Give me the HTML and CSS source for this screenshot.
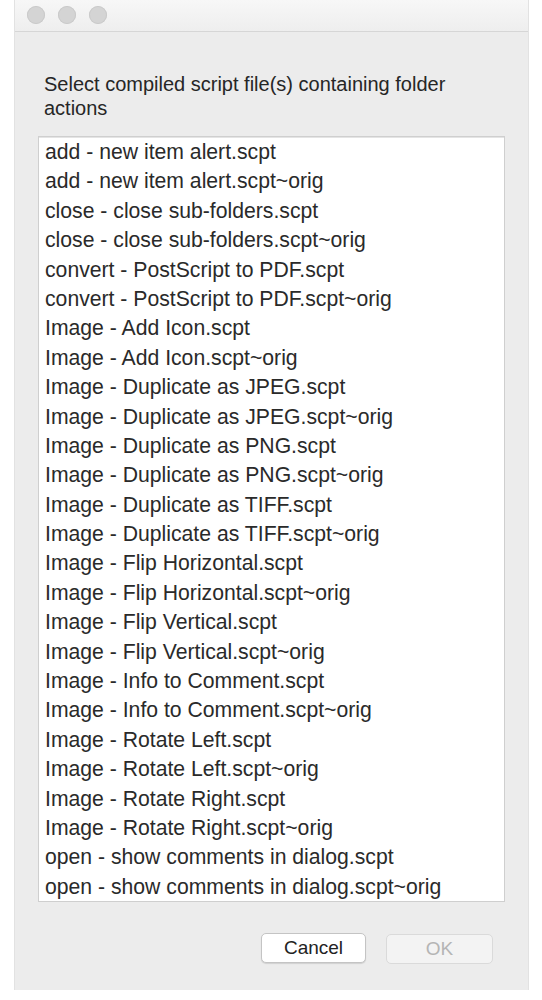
FILE: index.html
```html
<!DOCTYPE html>
<html>
<head>
<meta charset="utf-8">
<link rel="stylesheet" href="styles.css">
</head>
<body>
<div class="window">
  <div class="titlebar">
    <span class="light"></span><span class="light"></span><span class="light"></span>
  </div>
  <div class="content">
    <p class="prompt">Select compiled script file(s) containing folder actions</p>
    <ul class="list">
      <li>add - new item alert.scpt</li>
      <li>add - new item alert.scpt~orig</li>
      <li>close - close sub-folders.scpt</li>
      <li>close - close sub-folders.scpt~orig</li>
      <li>convert - PostScript to PDF.scpt</li>
      <li>convert - PostScript to PDF.scpt~orig</li>
      <li>Image - Add Icon.scpt</li>
      <li>Image - Add Icon.scpt~orig</li>
      <li>Image - Duplicate as JPEG.scpt</li>
      <li>Image - Duplicate as JPEG.scpt~orig</li>
      <li>Image - Duplicate as PNG.scpt</li>
      <li>Image - Duplicate as PNG.scpt~orig</li>
      <li>Image - Duplicate as TIFF.scpt</li>
      <li>Image - Duplicate as TIFF.scpt~orig</li>
      <li>Image - Flip Horizontal.scpt</li>
      <li>Image - Flip Horizontal.scpt~orig</li>
      <li>Image - Flip Vertical.scpt</li>
      <li>Image - Flip Vertical.scpt~orig</li>
      <li>Image - Info to Comment.scpt</li>
      <li>Image - Info to Comment.scpt~orig</li>
      <li>Image - Rotate Left.scpt</li>
      <li>Image - Rotate Left.scpt~orig</li>
      <li>Image - Rotate Right.scpt</li>
      <li>Image - Rotate Right.scpt~orig</li>
      <li>open - show comments in dialog.scpt</li>
      <li>open - show comments in dialog.scpt~orig</li>
    </ul>
    <div class="buttons">
      <button class="btn">Cancel</button>
      <button class="btn disabled">OK</button>
    </div>
  </div>
</div>
</body>
</html>
```
FILE: styles.css
```css
html, body {
  margin: 0;
  padding: 0;
  background: #ffffff;
}
body {
  font-family: "Liberation Sans", Arial, sans-serif;
  color: #2a2a2a;
}
.window {
  margin-left: 15px;
  width: 513px;
  height: 990px;
  background: #ececec;
  box-shadow: 0 0 0 1px #e2e2e2;
  display: flex;
  flex-direction: column;
}
.titlebar {
  height: 32px;
  box-sizing: border-box;
  background: linear-gradient(#f7f7f7, #eeeeee);
  border-bottom: 1px solid #d6d6d6;
  display: flex;
  align-items: center;
  gap: 13px;
  padding-left: 12px;
  padding-bottom: 1px;
}
.light {
  width: 18px;
  height: 18px;
  border-radius: 50%;
  background: #d4d4d4;
  box-shadow: inset 0 0 0 1px #cacaca;
}
.content {
  padding: 40px 23px 0 23px;
  display: flex;
  flex-direction: column;
}
.prompt {
  margin: 0 0 16px 6px;
  font-size: 20px;
  line-height: 24px;
  color: #262626;
}
.list {
  list-style: none;
  margin: 0;
  padding: 0 0 0 6px;
  background: #ffffff;
  border: 1px solid #cfcfcf;
  box-shadow: inset 0 1px 0 #e4e4e4;
}
.list li {
  height: 29.4px;
  line-height: 29.4px;
  font-size: 21.2px;
  white-space: nowrap;
  color: #2a2a2a;
}
.buttons {
  display: flex;
  justify-content: flex-end;
  gap: 20px;
  margin-top: 31px;
  padding-right: 12px;
}
.btn {
  font-family: "Liberation Sans", Arial, sans-serif;
  font-size: 19px;
  height: 30px;
  width: 105px;
  border-radius: 5px;
  background: #ffffff;
  border: 1px solid #c4c4c4;
  box-shadow: 0 1px 1px rgba(0,0,0,0.12);
  color: #222222;
  padding: 0;
}
.btn.disabled {
  width: 107px;
  margin-top: 1px;
  background: #f3f3f3;
  border-color: #dadada;
  box-shadow: none;
  color: #b5b5b5;
}
```
